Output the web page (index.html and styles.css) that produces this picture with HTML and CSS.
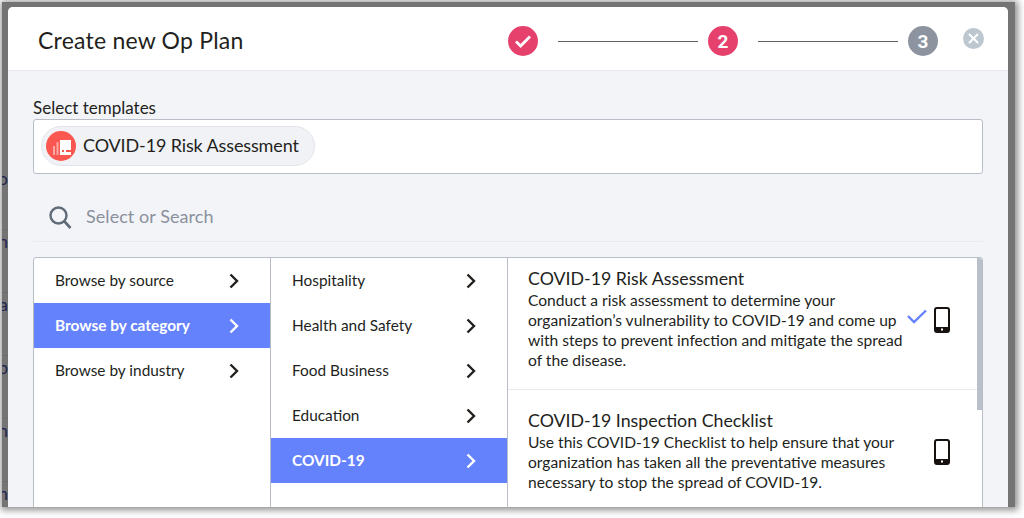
FILE: index.html
```html
<!DOCTYPE html>
<html lang="en">
<head>
    <meta charset="UTF-8">
    <title>Create new Op Plan</title>
    <link rel="stylesheet" href="styles.css">
</head>
<body>
    <div class="window">
        <div class="backdrop">
            <div class="backdrop-row">co</div>
            <div class="backdrop-row">an</div>
            <div class="backdrop-row">ea</div>
            <div class="backdrop-row">op</div>
            <div class="backdrop-row">an</div>
            <div class="backdrop-row">an</div>
        </div>
        <div class="modal">
            <div class="modal-header">
                <div class="modal-title">Create new Op Plan</div>
                <div class="steps">
                    <div class="step step-active">
                        <svg width="18" height="14" viewBox="0 0 18 14"><path d="M2 7.500l4.600 4.500L16 2.500" fill="none" stroke="#fff" stroke-width="2.800"/></svg>
                    </div>
                    <div class="step-line"></div>
                    <div class="step step-active">2</div>
                    <div class="step-line"></div>
                    <div class="step">3</div>
                </div>
                <div class="close">
                    <svg width="11" height="11" viewBox="0 0 11 11"><path d="M1 1l9 9M10 1l-9 9" stroke="#fff" stroke-width="2"/></svg>
                </div>
            </div>
            <div class="modal-body">
                <div class="field-label">Select templates</div>
                <div class="selected-box">
                    <div class="chip">
                        <div class="chip-icon">
                            <svg width="30" height="30" viewBox="0 0 30 30">
                                <rect x="7" y="15" width="2" height="9" fill="#fca8a3"/>
                                <rect x="10.500" y="11" width="2" height="13" fill="#fca8a3"/>
                                <path d="M14 9h11v15h-11z" fill="#fff"/>
                                <rect x="16" y="19" width="2" height="2" fill="#f9574f"/>
                                <rect x="20" y="19" width="5" height="2" fill="#f9574f"/>
                            </svg>
                        </div>
                        <span class="chip-text">COVID-19 Risk Assessment</span>
                    </div>
                </div>
                <div class="search">
                    <svg width="24" height="24" viewBox="0 0 24 24"><circle cx="9.500" cy="9.500" r="8" fill="none" stroke="#5f6b78" stroke-width="2.400"/><path d="M15.500 15.500l6 6.500" stroke="#5f6b78" stroke-width="2.600"/></svg>
                    <span class="search-text">Select or Search</span>
                </div>
                <div class="browser">
                    <div class="column">
                        <div class="row"><span class="row-text">Browse by source</span><svg class="chevron" width="10" height="16" viewBox="0 0 10 16"><path d="M1.500 1.500L8 8l-6.500 6.500" fill="none" stroke="currentColor" stroke-width="2.400"/></svg></div>
                        <div class="row row-active"><span class="row-text">Browse by category</span><svg class="chevron" width="10" height="16" viewBox="0 0 10 16"><path d="M1.500 1.500L8 8l-6.500 6.500" fill="none" stroke="currentColor" stroke-width="2.400"/></svg></div>
                        <div class="row"><span class="row-text">Browse by industry</span><svg class="chevron" width="10" height="16" viewBox="0 0 10 16"><path d="M1.500 1.500L8 8l-6.500 6.500" fill="none" stroke="currentColor" stroke-width="2.400"/></svg></div>
                    </div>
                    <div class="column">
                        <div class="row"><span class="row-text">Hospitality</span><svg class="chevron" width="10" height="16" viewBox="0 0 10 16"><path d="M1.500 1.500L8 8l-6.500 6.500" fill="none" stroke="currentColor" stroke-width="2.400"/></svg></div>
                        <div class="row"><span class="row-text">Health and Safety</span><svg class="chevron" width="10" height="16" viewBox="0 0 10 16"><path d="M1.500 1.500L8 8l-6.500 6.500" fill="none" stroke="currentColor" stroke-width="2.400"/></svg></div>
                        <div class="row"><span class="row-text">Food Business</span><svg class="chevron" width="10" height="16" viewBox="0 0 10 16"><path d="M1.500 1.500L8 8l-6.500 6.500" fill="none" stroke="currentColor" stroke-width="2.400"/></svg></div>
                        <div class="row"><span class="row-text">Education</span><svg class="chevron" width="10" height="16" viewBox="0 0 10 16"><path d="M1.500 1.500L8 8l-6.500 6.500" fill="none" stroke="currentColor" stroke-width="2.400"/></svg></div>
                        <div class="row row-active"><span class="row-text">COVID-19</span><svg class="chevron" width="10" height="16" viewBox="0 0 10 16"><path d="M1.500 1.500L8 8l-6.500 6.500" fill="none" stroke="currentColor" stroke-width="2.400"/></svg></div>
                    </div>
                    <div class="templates">
                        <div class="scroll-thumb"></div>
                        <div class="template template-first">
                            <div class="template-text">
                                <div class="template-title">COVID-19 Risk Assessment</div>
                                <div class="template-desc">Conduct a risk assessment to determine your organization’s vulnerability to COVID-19 and come up with steps to prevent infection and mitigate the spread of the disease.</div>
                            </div>
                            <svg class="tick" width="20" height="15" viewBox="0 0 20 15"><path d="M1 7l6 6L19 1.500" fill="none" stroke="#6582fd" stroke-width="2.400"/></svg>
                            <svg class="phone" width="16" height="26" viewBox="0 0 16 26"><rect x="1" y="1" width="14" height="24" rx="2" fill="none" stroke="#17110f" stroke-width="2"/><rect x="1" y="20" width="14" height="5" fill="#17110f"/><rect x="7" y="21.500" width="2" height="2" fill="#fff"/></svg>
                        </div>
                        <div class="template">
                            <div class="template-text">
                                <div class="template-title">COVID-19 Inspection Checklist</div>
                                <div class="template-desc">Use this COVID-19 Checklist to help ensure that your organization has taken all the preventative measures necessary to stop the spread of COVID-19.</div>
                            </div>
                            <div class="tick-space"></div>
                            <svg class="phone" width="16" height="26" viewBox="0 0 16 26"><rect x="1" y="1" width="14" height="24" rx="2" fill="none" stroke="#17110f" stroke-width="2"/><rect x="1" y="20" width="14" height="5" fill="#17110f"/><rect x="7" y="21.500" width="2" height="2" fill="#fff"/></svg>
                        </div>
                    </div>
                </div>
            </div>
        </div>
    </div>
</body>
</html>
```
FILE: styles.css
```css
html, body {
    margin: 0;
    height: 100%;
    background-color: #ffffff;
    overflow: hidden;
}
body {
    font-family: 'Lato', sans-serif;
    color: #231f1c;
    padding: 2px 0 0 2px;
    box-sizing: border-box;
}
.window {
    display: flex;
    width: 1013px;
    height: 505px;
    padding: 5px 7px 0 0;
    box-sizing: border-box;
    background-color: #747474;
    box-shadow: 1px 1px 7px 2px rgba(0,0,0,0.45);
    overflow: hidden;
}
.backdrop {
    width: 6px;
    flex: none;
    overflow: hidden;
    padding-top: 160px;
}
.backdrop-row {
    height: 63px;
    font-size: 18px;
    color: #23264f;
    direction: rtl;
    white-space: nowrap;
    box-sizing: border-box;
    border-bottom: 1px solid #6c6c6c;
}
.modal {
    flex: 1;
    min-width: 0;
    background-color: #f3f4f8;
    border-radius: 5px 5px 0 0;
    overflow: hidden;
}
.modal-header {
    height: 64px;
    box-sizing: border-box;
    display: flex;
    align-items: center;
    padding: 5px 24px 0 30px;
    background-color: #ffffff;
    border-bottom: 1px solid #e6e8ee;
}
.modal-title {
    font-size: 23px;
    flex: 1;
    letter-spacing: 0.22px;
    padding-bottom: 3px;
}
.steps {
    display: flex;
    align-items: center;
    gap: 20px;
    margin-right: 25px;
}
.step {
    width: 30px;
    height: 30px;
    border-radius: 50%;
    background-color: #8d949f;
    color: #ffffff;
    font-family: 'Roboto', sans-serif;
    font-weight: 700;
    font-size: 19px;
    display: flex;
    align-items: center;
    justify-content: center;
}
.step-active {
    background-color: #e6416d;
}
.step-line {
    width: 140px;
    height: 1px;
    background-color: #5f6368;
    margin-right: -10px;
}
.close {
    width: 21px;
    height: 21px;
    border-radius: 50%;
    background-color: #bcc7d0;
    display: flex;
    align-items: center;
    justify-content: center;
    margin-bottom: 5px;
}
.modal-body {
    padding: 25px 25px 0 25px;
}
.field-label {
    font-size: 17px;
    line-height: 23px;
}
.selected-box {
    height: 55px;
    box-sizing: border-box;
    padding: 6px 7px;
    background-color: #ffffff;
    border: 1px solid #b9bdc7;
    border-radius: 3px;
}
.chip {
    display: inline-flex;
    align-items: center;
    gap: 7px;
    height: 40px;
    box-sizing: border-box;
    padding: 0 15px 0 4px;
    background-color: #f1f2f6;
    border: 1px solid #e1e4ea;
    border-radius: 20px;
    font-size: 18px;
    letter-spacing: -0.13px;
}
.chip-text {
    margin-bottom: 2px;
}
.chip-icon {
    width: 30px;
    height: 30px;
    border-radius: 50%;
    background-color: #f9574f;
}
.chip-icon svg {
    display: block;
}
.search {
    height: 68px;
    box-sizing: border-box;
    display: flex;
    align-items: center;
    gap: 13px;
    padding: 20px 0 0 16px;
    border-bottom: 1px solid #e8eaef;
    color: #8a919c;
    font-size: 18px;
}
.search-text {
    margin-bottom: 4px;
    letter-spacing: 0.06px;
}
.browser {
    display: flex;
    margin-top: 15px;
    height: 300px;
    background-color: #ffffff;
    border: 1px solid #b9bdc7;
    border-radius: 3px;
}
.column {
    width: 236px;
    flex: none;
    border-right: 1px solid #b9bdc7;
}
.row {
    height: 45px;
    display: flex;
    align-items: center;
    justify-content: space-between;
    padding: 0 31px 0 21px;
    font-size: 15.400px;
    color: #231f1c;
}
.row-text {
    margin-bottom: 2px;
}
.row-active {
    background-color: #6582fd;
    color: #ffffff;
    font-weight: 700;
}
.templates {
    flex: 1;
    min-width: 0;
    position: relative;
}
.scroll-thumb {
    position: absolute;
    top: 0;
    right: 0;
    width: 5px;
    height: 152px;
    background-color: #b9c0ca;
    border-radius: 0 3px 0 0;
}
.template {
    display: flex;
    align-items: center;
    padding: 19px 32px 21px 20px;
    border-bottom: 1px solid #e8eaef;
}
.template-first {
    padding: 9px 32px 20px 20px;
}
.template-text {
    flex: 1;
    min-width: 0;
}
.template-title {
    font-size: 17.800px;
    line-height: 22px;
}
.template-desc {
    font-size: 15.600px;
    line-height: 20px;
    position: relative;
    top: 1px;
}
.tick {
    flex: none;
    margin: 0 7px 4px 2px;
}
.tick-space {
    flex: none;
    width: 29px;
}
.phone {
    flex: none;
    margin-top: 4px;
}
```
